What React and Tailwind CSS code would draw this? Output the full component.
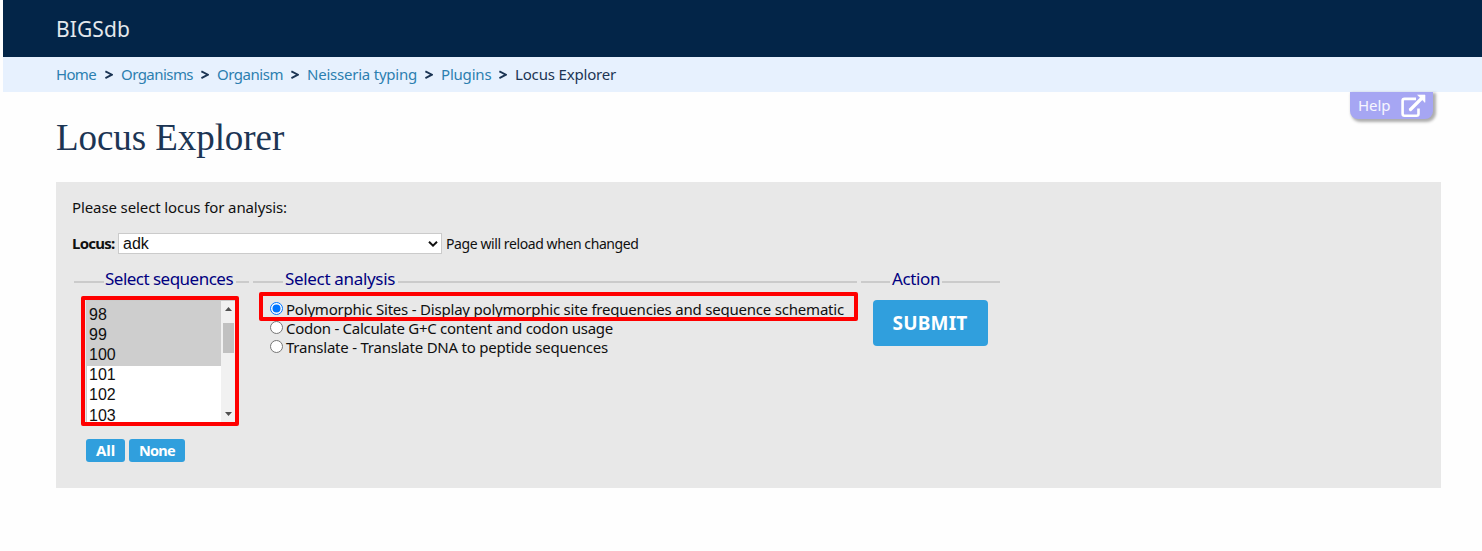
import React from 'react';

const crumbs = [
  { label: 'Home', cls: 'w-[41px] tracking-[-0.67px]' },
  { label: 'Organisms', cls: 'w-[72px] tracking-[-0.55px]' },
  { label: 'Organism', cls: 'w-[66px] tracking-[-0.47px]' },
  { label: 'Neisseria typing', cls: 'w-[110px] tracking-[-0.225px]' },
  { label: 'Plugins', cls: 'w-[50px] tracking-[-0.2px]' },
];

const sequences = [
  { id: 98, selected: true },
  { id: 99, selected: true },
  { id: 100, selected: true },
  { id: 101, selected: false },
  { id: 102, selected: false },
  { id: 103, selected: false },
];

const analyses = [
  {
    label: 'Polymorphic Sites - Display polymorphic site frequencies and sequence schematic',
    cls: 'tracking-[-0.207px]',
    checked: true,
  },
  { label: 'Codon - Calculate G+C content and codon usage', cls: 'tracking-[-0.268px]', checked: false },
  { label: 'Translate - Translate DNA to peptide sequences', cls: 'tracking-[-0.224px]', checked: false },
];

function Legend({ children, cls, lead }) {
  return (
    <div className="flex h-5 items-center">
      <div className={`mt-[5px] h-[2px] shrink-0 bg-[#cbcbcb] ${lead}`} />
      <div className={`shrink-0 whitespace-nowrap text-[17px] leading-5 text-[#000080] ${cls}`}>{children}</div>
      <div className="mt-[5px] h-[2px] grow bg-[#cbcbcb]" />
    </div>
  );
}

function Radio({ checked }) {
  return (
    <svg className="mb-[2px] h-[13px] w-[13px] shrink-0" viewBox="0 0 13 13">
      <circle cx="6.5" cy="6.5" r="6" fill="#fff" stroke={checked ? '#0075ff' : '#767676'} strokeWidth="1" />
      {checked && <circle cx="6.5" cy="6.5" r="4" fill="#0075ff" />}
    </svg>
  );
}

function HelpTab() {
  return (
    <div className="absolute right-[49px] top-[92px] flex h-[27px] w-[83px] items-center rounded-b-lg bg-[#a6a6f3] pl-2 text-[15px] tracking-[-0.1px] text-white/90 shadow-[2px_2px_3px_1px_rgba(0,0,0,0.32)]">
      <span className="w-[43px]">Help</span>
      <svg className="h-6 w-[25px]" viewBox="0 0 25 24" fill="none">
        <path d="M15 4.9H3.5Q1.6 4.9 1.6 6.8V19.8Q1.6 21.7 3.5 21.7H15.6Q17.5 21.7 17.5 19.8V14.4" stroke="#fff" strokeWidth="2.6" />
        <path d="M9.5 15.5L20.5 4.5" stroke="#fff" strokeWidth="3.2" strokeLinecap="round" />
        <path d="M16.6 1H24V8.4Z" fill="#fff" stroke="#fff" strokeWidth="0.6" strokeLinejoin="round" />
      </svg>
    </div>
  );
}

function SequenceList() {
  return (
    <div className="relative ml-3 mt-[11px] flex h-[123px] w-[150px] border border-[#cbcbcb] bg-white">
      <div className="flex w-[135px] flex-col overflow-hidden font-['Liberation_Sans',sans-serif] text-[16px] text-[#101010]">
        {sequences.map((s) => (
          <div
            key={s.id}
            className={`h-5 shrink-0 pl-[2px] leading-[18px] first:h-[25px] first:pt-[5px] last:h-4 last:leading-5 ${s.selected ? 'bg-[#cecece]' : 'bg-white'}`}
          >
            {s.id}
          </div>
        ))}
      </div>
      <div className="flex w-[14px] flex-col items-center bg-[#f1f1f1]">
        <svg className="mt-[6px] h-1 w-[7px]" viewBox="0 0 7 4"><path d="M0 4L3.5 0L7 4Z" fill="#505050" /></svg>
        <div className="mt-3 h-[30px] w-[11px] bg-[#c1c1c1]" />
        <svg className="mt-[59px] h-1 w-[7px]" viewBox="0 0 7 4"><path d="M0 0L3.5 4L7 0Z" fill="#505050" /></svg>
      </div>
      <div className="absolute left-[-6px] top-[-5px] h-[130px] w-[158px] rounded-[2px] border-4 border-[#ff0000]" />
    </div>
  );
}

export default function App() {
  return (
    <div className="relative h-[551px] w-[1482px] overflow-hidden bg-[#fefefe] pl-[3px] font-['Noto_Sans',sans-serif] text-[15px] text-[#101010]">
      <header className="flex h-[57px] items-center bg-[#032548] pl-[53px] pt-[2px] text-[21px] tracking-[0.1px] text-[#e4e8ec]">BIGSdb</header>
      <nav className="flex h-[35px] items-center bg-[#e7f1fe] pl-[53px] text-[#2c7fb0]">
        {crumbs.map((c) => (
          <div key={c.label} className="flex items-center">
            <span className={`whitespace-nowrap ${c.cls}`}>{c.label}</span>
            <svg className="mx-2 h-[10px] w-[8px]" viewBox="0 0 8 10" fill="none">
              <path d="M0.4 1.3L7 4.7L0.4 8.1" stroke="#1c3554" strokeWidth="1.9" />
            </svg>
          </div>
        ))}
        <span className="whitespace-nowrap tracking-[-0.17px] text-[#1c3554]">Locus Explorer</span>
      </nav>
      <HelpTab />
      <h1 className="ml-[53px] mt-[25px] h-[65px] font-['Liberation_Serif',serif] text-[37px] leading-[42px] tracking-[-0.07px] text-[#1c3554]">Locus Explorer</h1>

      <main className="ml-[53px] h-[306px] w-[1385px] bg-[#e8e8e8] pl-4 pt-[15px]">
        <p className="h-5 leading-5 tracking-[-0.108px]">Please select locus for analysis:</p>
        <div className="mt-4 flex h-[21px] items-center">
          <span className="w-[46px] font-bold tracking-[-0.75px]">Locus:</span>
          <div className="flex h-[21px] w-[324px] items-center justify-between border border-[#cbcbcb] bg-white pl-1 pr-[3px] font-['Liberation_Sans',sans-serif] text-[16px] leading-[19px]">
            <span>adk</span>
            <svg className="h-[6px] w-[10px]" viewBox="0 0 10 6" fill="none">
              <path d="M1 0.8L5 4.6L9 0.8" stroke="#101010" strokeWidth="2" />
            </svg>
          </div>
          <span className="ml-1 whitespace-nowrap text-[14px] tracking-[-0.41px]">Page will reload when changed</span>
        </div>

        <div className="ml-[2px] mt-[15px] flex gap-1">
          <section className="w-[175px]">
            <Legend lead="w-[30px]" cls="w-[132px] pl-px tracking-[-0.518px]">Select sequences</Legend>
            <SequenceList />
            <div className="ml-3 mt-4 flex gap-1 font-bold text-white">
              <div className="flex h-[23px] w-[39px] items-center justify-center rounded-[3px] bg-[#309fdd] tracking-[-0.1px]">All</div>
              <div className="flex h-[23px] w-14 items-center justify-center rounded-[3px] bg-[#309fdd] text-[14.5px] tracking-[-0.7px]">None</div>
            </div>
          </section>

          <section className="relative w-[604px]">
            <Legend lead="w-[30px]" cls="w-[115px] pl-[2px] tracking-[-0.328px]">Select analysis</Legend>
            <div className="mt-[11px] pl-[17px]">
              {analyses.map((a) => (
                <div key={a.label} className="flex h-[19px] items-center">
                  <Radio checked={a.checked} />
                  <span className={`ml-[3px] whitespace-nowrap leading-[19px] ${a.cls}`}>{a.label}</span>
                </div>
              ))}
            </div>
            <div className="absolute left-[6px] top-[23px] h-[29px] w-[599px] rounded-[2px] border-4 border-[#ff0000]" />
          </section>

          <section className="w-[139px]">
            <Legend lead="w-[29px]" cls="w-[52px] pl-[2px] tracking-[-0.389px]">Action</Legend>
            <div className="ml-3 mt-[11px] flex h-[46px] w-[115px] items-center justify-center rounded-[4px] bg-[#309fdd] pr-px text-[19px] font-bold tracking-[0.2px] text-white">SUBMIT</div>
          </section>
        </div>
      </main>
    </div>
  );
}
